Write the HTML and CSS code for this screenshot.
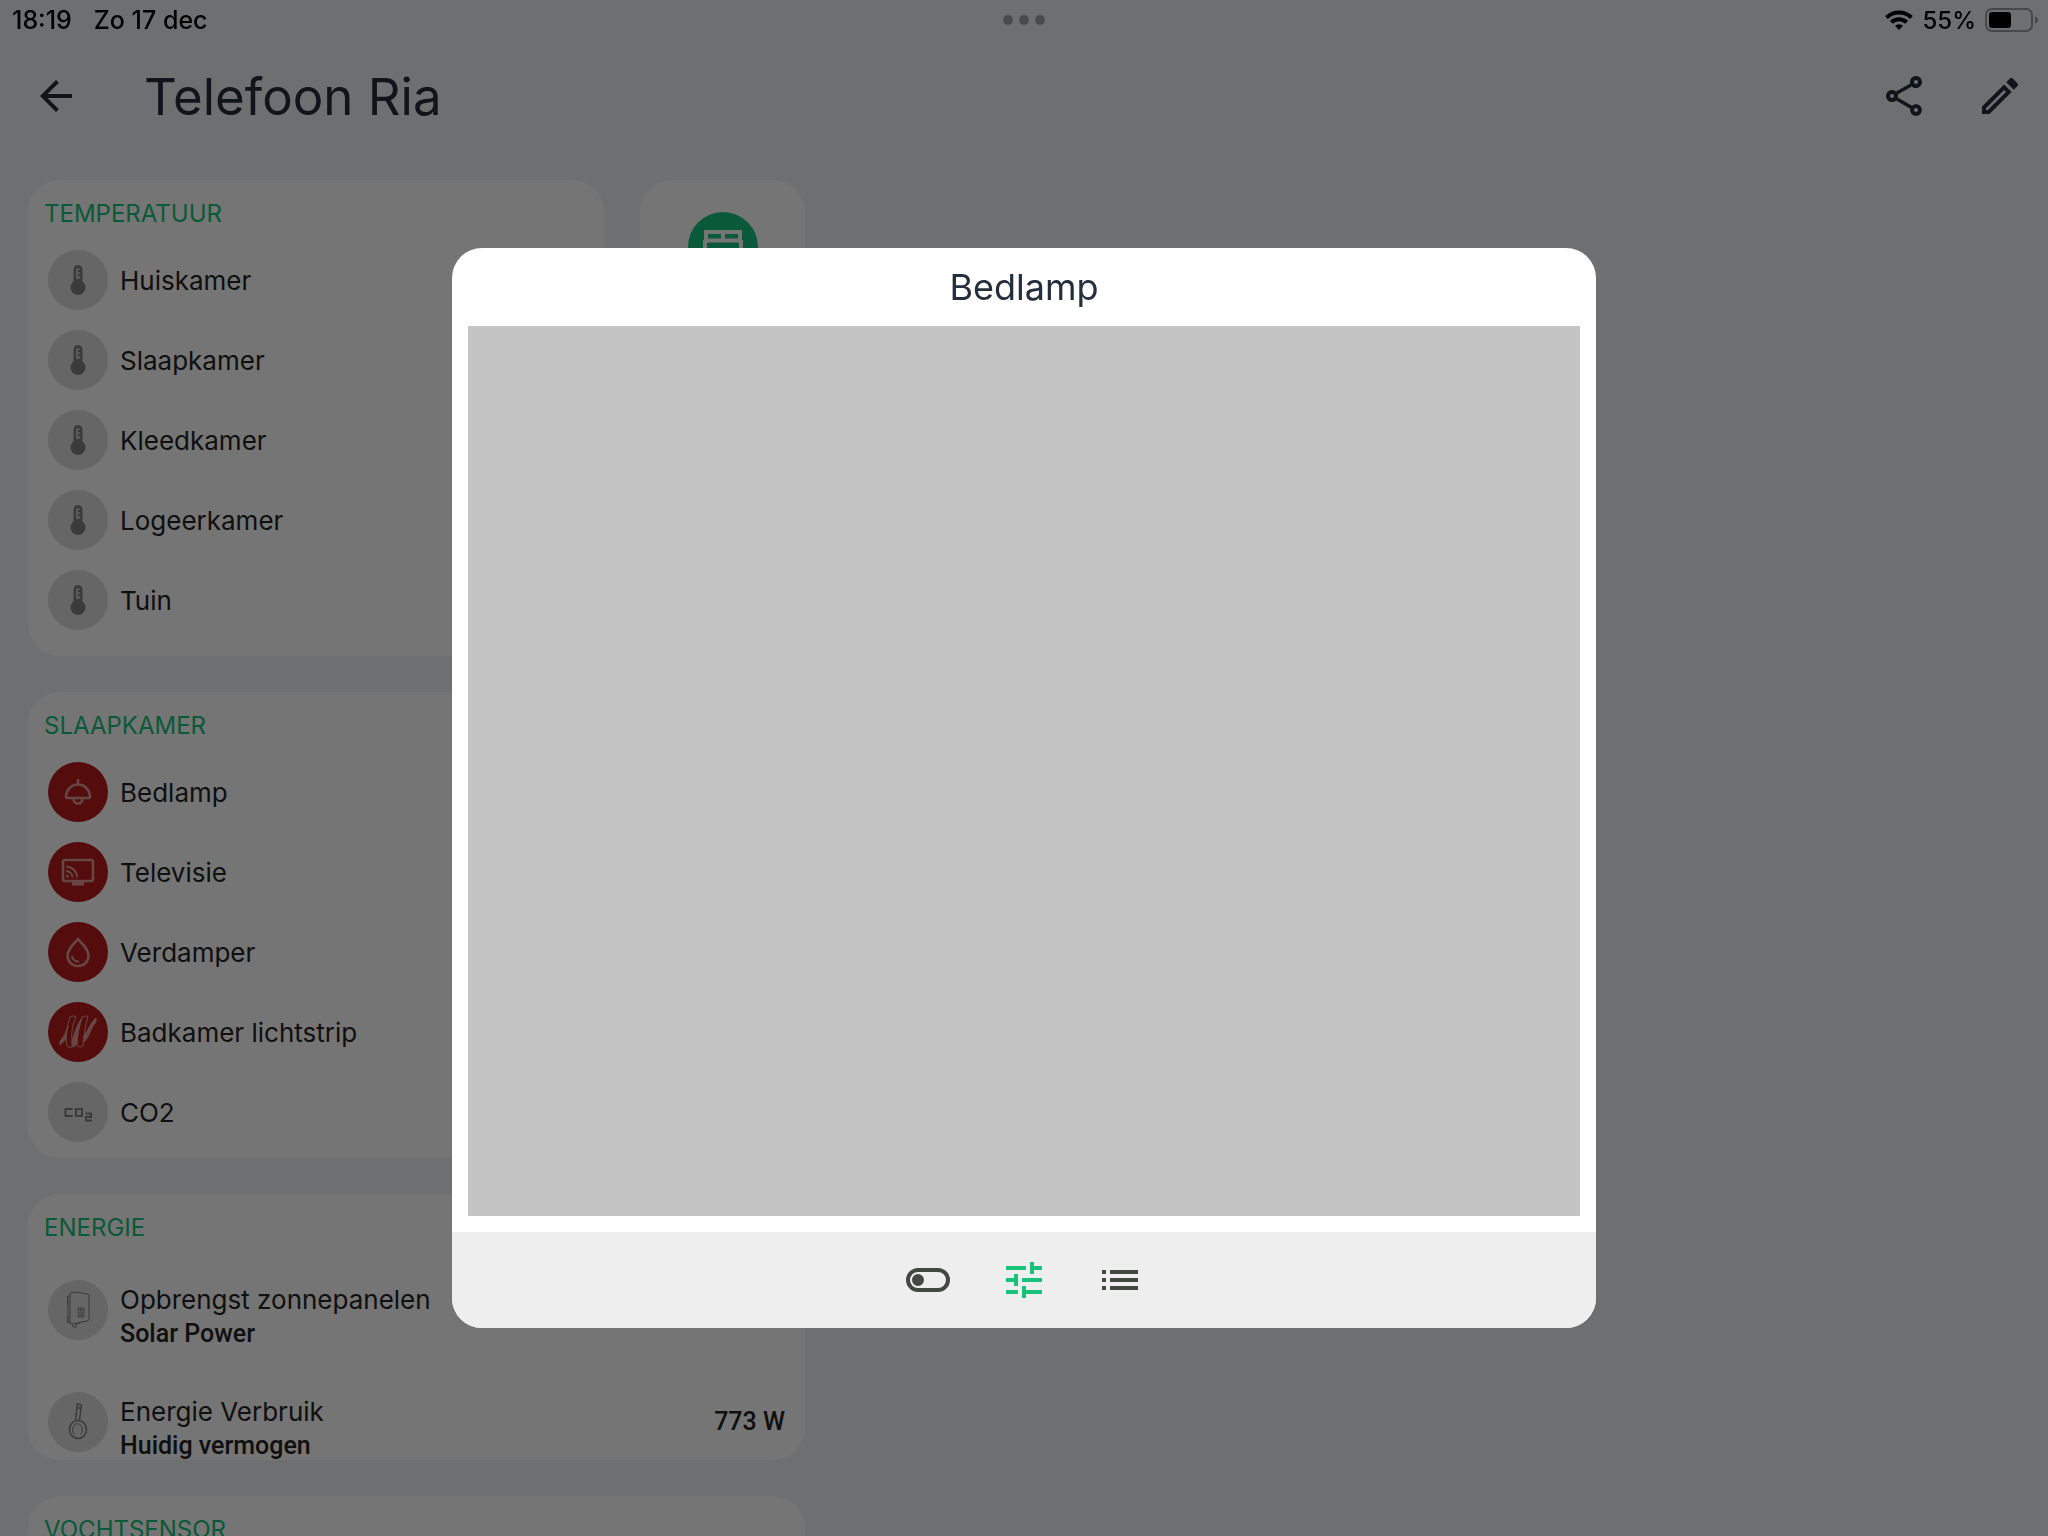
FILE: index.html
```html
<!DOCTYPE html>
<html lang="nl">
<head>
  <meta charset="UTF-8" />
  <meta name="viewport" content="width=device-width, initial-scale=1.0" />
  <title>Telefoon Ria</title>
  <link rel="stylesheet" href="styles.css">
</head>
<body>
  <svg class="defs" aria-hidden="true">
    <symbol id="thermometer" viewBox="0 0 40 40">
      <circle cx="20" cy="27.500" r="7.500" fill="currentColor"/>
      <path d="M15.500 24V9.500a4.500 4.500 0 0 1 9 0V24z" fill="currentColor"/>
      <path d="M18 19V10q0-2 2-2 2 0 2 2H20v2h2v2h-2v2h2v3z" fill="#c4c4c4"/>
    </symbol>
  </svg>

  <div class="status-bar">
    <span class="time">18:19</span>
    <span class="date">Zo 17 dec</span>
    <svg class="dots" viewBox="0 0 42 10" width="42" height="10"><circle cx="5" cy="5" r="5"/><circle cx="21" cy="5" r="5"/><circle cx="37" cy="5" r="5"/></svg>
    <div class="status-right">
      <svg class="wifi" viewBox="0 0 28 20" width="28" height="20" fill="none" stroke="#000" stroke-width="4">
        <path d="M1.500 7.500a18 18 0 0 1 25 0"/>
        <path d="M6.300 12.300a11 11 0 0 1 15.400 0"/>
        <path d="M14 20l-4-4.200a5.800 5.800 0 0 1 8 0z" fill="#000" stroke="none"/>
      </svg>
      <span>55%</span>
      <svg class="battery" viewBox="0 0 54 24" width="54" height="24">
        <rect x="1" y="1" width="46" height="22" rx="6" fill="none" stroke="#47484a" stroke-width="2"/>
        <rect x="4" y="4" width="22" height="16" rx="3"/>
        <path d="M50 8.500q3 1 3 3.500t-3 3.500z" fill="#47484a"/>
      </svg>
    </div>
  </div>

  <header class="app-bar">
    <button class="back" aria-label="Terug">
      <svg class="icon" viewBox="0 0 24 24"><path d="M20 11H7.830l5.590-5.590L12 4l-8 8 8 8 1.410-1.410L7.830 13H20v-2z"/></svg>
    </button>
    <h1>Telefoon Ria</h1>
    <button class="action" aria-label="Delen">
      <svg class="icon" viewBox="0 0 24 24"><path d="M18 16.080c-.76 0-1.440.3-1.960.77L8.910 12.700c.05-.23.09-.46.09-.7s-.04-.47-.09-.7l7.050-4.110c.54.5 1.250.81 2.040.81 1.660 0 3-1.340 3-3s-1.340-3-3-3-3 1.340-3 3c0 .24.04.47.09.7L8.040 9.810C7.500 9.310 6.790 9 6 9c-1.660 0-3 1.340-3 3s1.340 3 3 3c.79 0 1.500-.31 2.040-.81l7.120 4.160c-.05.21-.08.43-.08.65 0 1.610 1.310 2.920 2.920 2.920s2.920-1.310 2.920-2.920-1.310-2.920-2.920-2.920zM18 4c.55 0 1 .45 1 1s-.45 1-1 1-1-.45-1-1 .45-1 1-1zM6 13c-.55 0-1-.45-1-1s.45-1 1-1 1 .45 1 1-.45 1-1 1zm12 7.020c-.55 0-1-.45-1-1s.45-1 1-1 1 .45 1 1-.45 1-1 1z"/></svg>
    </button>
    <button class="action" aria-label="Bewerken">
      <svg class="icon" viewBox="0 0 24 24"><path d="M3 17.250V21h3.750L17.810 9.940l-3.750-3.750L3 17.250zM5.920 19H5v-.92l9.060-9.060.92.92L5.920 19zM20.710 5.630l-2.340-2.340c-.2-.2-.45-.29-.71-.29s-.51.1-.7.29l-1.830 1.830 3.750 3.750 1.830-1.830c.39-.39.39-1.020 0-1.410z"/></svg>
    </button>
  </header>

  <main class="board">
    <section class="card">
      <h2>Temperatuur</h2>
      <ul class="devices">
        <li><span class="badge"><svg><use href="#thermometer"/></svg></span>Huiskamer</li>
        <li><span class="badge"><svg><use href="#thermometer"/></svg></span>Slaapkamer</li>
        <li><span class="badge"><svg><use href="#thermometer"/></svg></span>Kleedkamer</li>
        <li><span class="badge"><svg><use href="#thermometer"/></svg></span>Logeerkamer</li>
        <li><span class="badge"><svg><use href="#thermometer"/></svg></span>Tuin</li>
      </ul>
    </section>

    <section class="card tile">
      <button class="tile-button" aria-label="Bed">
        <svg viewBox="0 0 42 42" width="42" height="42" fill="none" stroke="#fff" stroke-width="4">
          <path d="M3 38V14M39 38V14M4 17V6h34v11M21 6v10M2 14.500h38M2 24h38"/>
        </svg>
      </button>
    </section>

    <section class="card compact">
      <h2>Slaapkamer</h2>
      <ul class="devices">
        <li>
          <span class="badge on"><svg viewBox="0 0 40 40" fill="none" stroke="currentColor" stroke-width="2.600">
            <path d="M20 7v5M8 25a12 12.500 0 0 1 24 0q0 1-1 1H9q-1 0-1-1zM15.500 26.500a4.500 5 0 0 0 9 0"/>
          </svg></span>Bedlamp
        </li>
        <li>
          <span class="badge on"><svg viewBox="0 0 40 40" fill="none" stroke="currentColor" stroke-width="2.600">
            <rect x="5" y="8" width="30" height="21" rx="2"/>
            <path d="M14 31.500h12" stroke-width="4"/>
            <path d="M8 14.500a11 11 0 0 1 11 11M8 19a6.500 6.500 0 0 1 6.500 6.500" stroke-width="2"/>
            <path d="M8 22.500a3 3 0 0 1 3 3H8z" fill="currentColor" stroke="none"/>
          </svg></span>Televisie
        </li>
        <li>
          <span class="badge on"><svg viewBox="0 0 40 40" fill="none" stroke="currentColor" stroke-width="2.600">
            <path d="M20 7C15 13 9.500 17 9.500 24a10.500 10 0 0 0 21 0C30.500 17 25 13 20 7z"/>
            <path d="M14 24a6 6 0 0 0 7 5.500" stroke-width="2"/>
          </svg></span>Verdamper
        </li>
        <li>
          <span class="badge on"><svg viewBox="0 0 40 40" fill="currentColor" stroke="currentColor" stroke-width="1">
            <path d="M12 5q3-2 6-.5C13 16 13 26 15 34q-3 3-6 0C7 25 9 14 12 5z" fill="none"/>
            <path d="M24 5q3-2 6-.5C27 14 26 25 25 34q-3 2-6 0C19 24 21 14 24 5z" fill="none"/>
            <path d="M2 33v-4C6 25 8 20 10 14q-2 8-2 13z"/>
            <path d="M14 29C16 23 19 12 24 6 21 14 19 24 19 31q-2 4-5 4z"/>
            <path d="M26 30V23C30 20 32 11 38 6v4C33 15 32 24 26 30z"/>
          </svg></span>Badkamer lichtstrip
        </li>
        <li>
          <span class="badge"><svg viewBox="0 0 40 40" fill="none" stroke="currentColor" stroke-width="2">
            <path d="M14 17.500V17H7.500v7H14v-.500M18 17h6v7h-6zM27.500 21.500H33V25h-5v3.500h6"/>
          </svg></span>CO2
        </li>
      </ul>
    </section>

    <section class="card energy">
      <h2>Energie</h2>
      <ul class="meters">
        <li>
          <span class="badge"><svg viewBox="0 0 40 40" fill="none" stroke="currentColor" stroke-width="1">
            <path d="M12 4q0-2 2-2l3 1 2-1 10 2q2 0 2 2v23q0 2-2 2l-14 3q-3 0-3-2zM12 6h-2v27h2M15 34v3h3v-3l4-1M9.500 6v9M9.500 26v6"/>
            <path d="M20 18h6v5h-6zM22 19h2v2h-2zM20 25h6v2h-6z"/>
          </svg></span>
          <div class="meter-text">Opbrengst zonnepanelen<strong>Solar Power</strong></div>
        </li>
        <li>
          <span class="badge"><svg viewBox="0 0 40 40" fill="none" stroke="currentColor" stroke-width="1.500">
            <path d="M17.500 18l2-16 4 1-2 15M19.500 6h3"/>
            <ellipse cx="20" cy="27.500" rx="8.500" ry="9"/>
            <path d="M16.500 32.500a5 6 0 1 1 6 0" stroke-width="1"/>
          </svg></span>
          <div class="meter-text">Energie Verbruik<strong>Huidig vermogen</strong></div>
          <span class="value">773 W</span>
        </li>
      </ul>
    </section>

    <section class="card">
      <h2>Vochtsensor</h2>
    </section>
  </main>

  <div class="overlay">
    <div class="dialog" role="dialog" aria-modal="true" aria-labelledby="dialog-title">
      <h2 id="dialog-title">Bedlamp</h2>
      <div class="dialog-content"></div>
      <nav class="dialog-tabs">
        <button aria-label="Schakelaar">
          <svg class="icon" viewBox="0 0 24 24"><path d="M7 9a3 3 0 1 0 0 6 3 3 0 0 0 0-6m10-3H7a6 6 0 0 0 0 12h10a6 6 0 0 0 0-12m0 10H7a4 4 0 0 1 0-8h10a4 4 0 0 1 0 8z"/></svg>
        </button>
        <button class="active" aria-label="Instellingen">
          <svg class="icon" viewBox="0 0 24 24"><path d="M3 17v2h6v-2H3zM3 5v2h10V5H3zm10 16v-2h8v-2h-8v-2h-2v6h2zM7 9v2H3v2h4v2h2V9H7zm14 4v-2H11v2h10zm-6-4h2V7h4V5h-4V3h-2v6z"/></svg>
        </button>
        <button aria-label="Lijst">
          <svg class="icon" viewBox="0 0 24 24"><path d="M3 13h2v-2H3v2zm0 4h2v-2H3v2zm0-8h2V7H3v2zm4 4h14v-2H7v2zm0 4h14v-2H7v2zM7 7v2h14V7H7z"/></svg>
        </button>
      </nav>
    </div>
  </div>
</body>
</html>
```
FILE: styles.css
```css
* {
  box-sizing: border-box;
}
body {
  margin: 0;
  height: 100vh;
  overflow: hidden;
  background: #eff1f6;
  color: #242424;
  font-family: Inter, "Liberation Sans", sans-serif;
  font-size: 26px;
}
h1, h2, ul {
  margin: 0;
  padding: 0;
  font-weight: 400;
}
button {
  display: flex;
  align-items: center;
  justify-content: center;
  padding: 0;
  border: 0;
  background: none;
  color: inherit;
  cursor: pointer;
}
.defs {
  display: none;
}
.icon {
  width: 48px;
  height: 48px;
  fill: currentColor;
}

/* status bar stays above the dimmed page */
.status-bar {
  position: relative;
  z-index: 2;
  display: flex;
  align-items: center;
  gap: 22px;
  height: 40px;
  padding: 0 9px 0 12px;
  color: #000;
  font-size: 24px;
  font-weight: 500;
}
.time, .date {
  font-size: 25px;
}
.dots {
  position: absolute;
  left: calc(50% - 21px);
  fill: #4a4b4d;
}
.status-right {
  display: flex;
  align-items: center;
  gap: 9px;
  margin-left: auto;
}

.app-bar {
  display: flex;
  align-items: center;
  height: 112px;
  color: #242f3e;
}
.app-bar h1 {
  flex: 1;
  padding-left: 32px;
  font-size: 51px;
}
.back {
  width: 112px;
  height: 112px;
}
.action {
  width: 96px;
  height: 96px;
}

.board {
  display: grid;
  grid-template-columns: minmax(0, 576px) 165px;
  gap: 36px;
  align-items: start;
  padding: 28px;
}
.card {
  grid-column: 1;
  min-height: 164px;
  padding-bottom: 16px;
  border-radius: 32px;
  background: #fff;
  overflow: hidden;
}
.card.compact {
  padding-bottom: 6px;
}
.card.energy {
  padding-bottom: 0;
}
.card.energy, .card.energy ~ .card {
  grid-column: 1 / -1;
}
.card h2 {
  padding: 17px 16px 9px;
  color: #17c37b;
  font-size: 24px;
  line-height: 34px;
  text-transform: uppercase;
}
.card.tile {
  grid-column: 2;
  padding-top: 32px;
}
.tile-button {
  width: 70px;
  height: 70px;
  margin: 0 auto;
  border-radius: 50%;
  background: #17c37b;
}

.devices li {
  display: flex;
  align-items: center;
  gap: 12px;
  height: 80px;
  padding: 0 20px;
}
.badge {
  display: flex;
  flex: none;
  align-items: center;
  justify-content: center;
  width: 60px;
  height: 60px;
  border-radius: 50%;
  background: #dedede;
  color: #808080;
}
.badge svg {
  width: 40px;
  height: 40px;
}
.badge.on {
  background: #b71c1c;
  color: #e09a9a;
}

.meters {
  display: grid;
  gap: 18px;
}
.meters li {
  display: flex;
  gap: 12px;
  height: 94px;
  padding: 26px 20px 0;
}
.meter-text {
  flex: 1;
  padding-top: 3px;
  line-height: 34px;
}
.meter-text strong {
  display: block;
}
.meter-text strong, .value {
  font-family: Roboto, "Liberation Sans", sans-serif;
  font-size: 25px;
  font-weight: 500;
}
.value {
  line-height: 60px;
}

.overlay {
  position: fixed;
  inset: 0;
  z-index: 1;
  display: flex;
  align-items: center;
  justify-content: center;
  padding: 40px 40px 0;
  background: rgba(0, 0, 0, 0.54);
}
.dialog {
  width: 100%;
  max-width: 1144px;
  border-radius: 30px;
  background: #fff;
  overflow: hidden;
}
.dialog h2 {
  color: #242f3e;
  font-size: 36px;
  line-height: 78px;
  text-align: center;
}
.dialog-content {
  margin: 0 16px 16px;
  aspect-ratio: 5 / 4;
  background: #c4c4c4;
}
.dialog-tabs {
  display: flex;
  justify-content: center;
  background: #eee;
  color: #414941;
}
.dialog-tabs button {
  width: 96px;
  height: 96px;
}
.dialog-tabs .active {
  color: #17c37b;
}
```
